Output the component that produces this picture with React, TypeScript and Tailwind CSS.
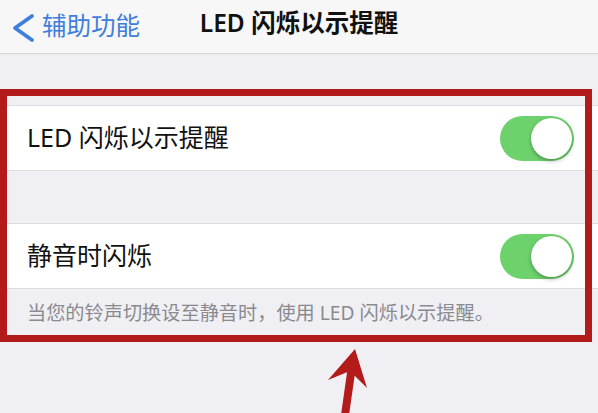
import React from "react";

const font = { fontFamily: '"Noto Sans", "Noto Sans CJK SC", sans-serif' };

function Toggle() {
  return (
    <div className="relative h-[45px] w-[74px] rounded-full bg-[#6dd26c]">
      <div className="absolute right-[2px] top-[2px] h-[41px] w-[41px] rounded-full bg-white shadow-[0_2px_4px_rgba(0,0,0,0.3)]" />
    </div>
  );
}

function Row({ label }: { label: string }) {
  return (
    <div className="flex h-[64px] items-center justify-between bg-white pl-[27px] pr-[24px]">
      <span className="text-[25px] text-[#111]">{label}</span>
      <Toggle />
    </div>
  );
}

export default function App() {
  return (
    <div className="relative h-[413px] w-[598px] overflow-hidden bg-[#efeff4]" style={font}>
      {/* nav bar */}
      <div className="relative flex h-[54px] items-center border-b border-[#d6d6da] bg-[#f7f7f8]">
        <div className="flex items-center pl-[10px] text-[#3f7edb]">
          <svg className="mt-[3px]" width="26" height="30" viewBox="0 0 26 30" fill="none" stroke="currentColor" strokeWidth="3.8" strokeLinecap="round" strokeLinejoin="round">
            <path d="M22 3 5 15l17 12" />
          </svg>
          <span className="ml-[6px] text-[24.5px] leading-none">辅助功能</span>
        </div>
        <div className="absolute inset-x-0 top-[8px] text-center text-[24.5px] font-semibold leading-[30px] text-[#111]">
          LED 闪烁以示提醒
        </div>
      </div>

      <div className="h-[51px]" />

      <div className="border-y border-[#dcdce0]">
        <Row label="LED 闪烁以示提醒" />
      </div>

      <div className="h-[52px]" />

      <div className="border-y border-[#dcdce0]">
        <Row label="静音时闪烁" />
      </div>

      <p className="pl-[27px] pt-[12px] text-[19.2px] leading-[24px] text-[#8a8a8f]">
        当您的铃声切换设至静音时，使用 LED 闪烁以示提醒。
      </p>

      {/* annotation */}
      <div className="pointer-events-none absolute left-[0px] top-[89px] h-[253px] w-[592px] border-[7px] border-[#b31b1b]" />
      <svg className="pointer-events-none absolute left-0 top-0" width="598" height="413" viewBox="0 0 598 413">
        <path d="M345 415 L352 366" stroke="#b31b1b" strokeWidth="8" />
        <path d="M355 349 L328 380 L350 371 L367 388 Z" fill="#b31b1b" />
      </svg>
    </div>
  );
}
